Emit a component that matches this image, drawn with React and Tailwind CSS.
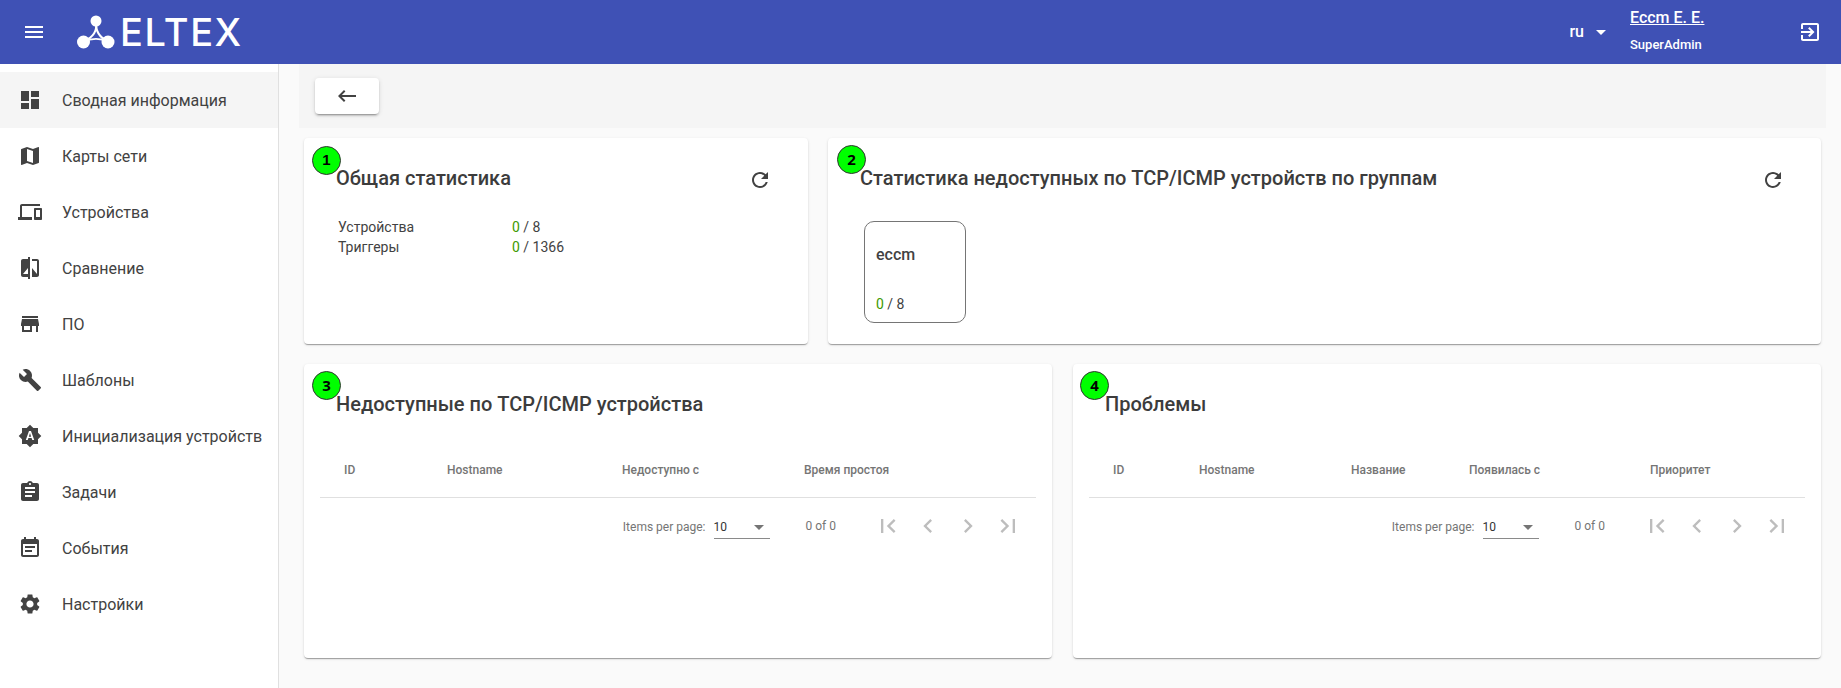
import React from "react";

const P = {
  menu: "M3 18h18v-2H3v2zm0-5h18v-2H3v2zm0-7v2h18V6H3z",
  dashboard: "M3 13h8V3H3v10zm0 8h8v-6H3v6zm10 0h8V11h-8v10zm0-18v6h8V3h-8z",
  map: "M20.5 3l-.16.03L15 5.1 9 3 3.36 4.9c-.21.07-.36.25-.36.48V20.5c0 .28.22.5.5.5l.16-.03L9 18.9l6 2.1 5.64-1.9c.21-.07.36-.25.36-.48V3.5c0-.28-.22-.5-.5-.5zM15 19l-6-2.11V5l6 2.11V19z",
  devices: "M4 6h18V4H4c-1.1 0-2 .9-2 2v11H0v3h14v-3H4V6zm19 2h-6c-.55 0-1 .45-1 1v10c0 .55.45 1 1 1h6c.55 0 1-.45 1-1V9c0-.55-.45-1-1-1zm-1 9h-4v-7h4v7z",
  compare: "M10 3H5c-1.1 0-2 .9-2 2v14c0 1.1.9 2 2 2h5v2h2V1h-2v2zm0 15H5l5-6v6zm9-15h-5v2h5v13l-5-6v9h5c1.1 0 2-.9 2-2V5c0-1.1-.9-2-2-2z",
  store: "M20 4H4v2h16V4zm1 10v-2l-1-5H4l-1 5v2h1v6h10v-6h4v6h2v-6h1zm-9 4H6v-4h6v4z",
  build: "M22.7 19l-9.1-9.1c.9-2.3.4-5-1.5-6.9-2-2-5-2.4-7.4-1.3L9 6 6 9 1.6 4.7C.4 7.1.9 10.1 2.9 12.1c1.9 1.9 4.6 2.4 6.9 1.5l9.1 9.1c.4.4 1 .4 1.4 0l2.3-2.3c.5-.4.5-1.1.1-1.4z",
  auto: "M10.85 12.65h2.3L12 9l-1.15 3.65zM20 8.69V4h-4.69L12 .69 8.69 4H4v4.69L.69 12 4 15.31V20h4.69L12 23.31 15.31 20H20v-4.69L23.31 12 20 8.69zM14.3 16l-.7-2h-3.2l-.7 2H7.8L11 7h2l3.2 9h-1.9z",
  assignment: "M19 3h-4.18C14.4 1.84 13.3 1 12 1c-1.3 0-2.4.84-2.82 2H5c-1.1 0-2 .9-2 2v14c0 1.1.9 2 2 2h14c1.1 0 2-.9 2-2V5c0-1.1-.9-2-2-2zm-7 0c.55 0 1 .45 1 1s-.45 1-1 1-1-.45-1-1 .45-1 1-1zm2 14H7v-2h7v2zm3-4H7v-2h10v2zm0-4H7V7h10v2z",
  event: "M17 10H7v2h10v-2zm2-7h-1V1h-2v2H8V1H6v2H5c-1.11 0-1.99.9-1.99 2L3 19c0 1.1.89 2 2 2h14c1.1 0 2-.9 2-2V5c0-1.1-.9-2-2-2zm0 16H5V8h14v11zm-5-5H7v2h7v-2z",
  settings: "M19.14 12.94c.04-.3.06-.61.06-.94 0-.32-.02-.64-.07-.94l2.03-1.58c.18-.14.23-.41.12-.61l-1.92-3.32c-.12-.22-.37-.29-.59-.22l-2.39.96c-.5-.38-1.03-.7-1.62-.94l-.36-2.54c-.04-.24-.24-.41-.48-.41h-3.84c-.24 0-.43.17-.47.41l-.36 2.54c-.59.24-1.13.57-1.62.94l-2.39-.96c-.22-.08-.47 0-.59.22L2.74 8.87c-.12.21-.08.47.12.61l2.03 1.58c-.05.3-.09.63-.09.94s.02.64.07.94l-2.03 1.58c-.18.14-.23.41-.12.61l1.92 3.32c.12.22.37.29.59.22l2.39-.96c.5.38 1.03.7 1.62.94l.36 2.54c.05.24.24.41.48.41h3.84c.24 0 .44-.17.47-.41l.36-2.54c.59-.24 1.13-.56 1.62-.94l2.39.96c.22.08.47 0 .59-.22l1.92-3.32c.12-.22.07-.47-.12-.61l-2.01-1.58zM12 15.6c-1.98 0-3.6-1.62-3.6-3.6s1.62-3.6 3.6-3.6 3.6 1.62 3.6 3.6-1.62 3.6-3.6 3.6z",
  back: "M21 11H6.83l3.58-3.59L9 6l-6 6 6 6 1.41-1.41L6.83 13H21z",
  exit: "M10.09 15.59L11.5 17l5-5-5-5-1.41 1.41L12.67 11H3v2h9.67l-2.58 2.59zM19 3H5c-1.11 0-2 .9-2 2v4h2V5h14v14H5v-4H3v4c0 1.1.89 2 2 2h14c1.1 0 2-.9 2-2V5c0-1.1-.9-2-2-2z",
  refresh: "M17.65 6.35C16.2 4.9 14.21 4 12 4c-4.42 0-7.99 3.58-7.99 8s3.57 8 7.99 8c3.73 0 6.84-2.55 7.73-6h-2.08c-.82 2.33-3.04 4-5.65 4-3.31 0-6-2.69-6-6s2.69-6 6-6c1.66 0 3.14.69 4.22 1.78L13 11h7V4l-2.35 2.35z",
  first: "M18.41 16.59L13.82 12l4.59-4.59L17 6l-6 6 6 6zM6 6h2v12H6z",
  prev: "M15.41 7.41L14 6l-6 6 6 6 1.41-1.41L10.83 12z",
  next: "M10 6L8.59 7.41 13.17 12l-4.58 4.59L10 18l6-6z",
  last: "M5.59 7.41L10.18 12l-4.59 4.59L7 18l6-6-6-6zM16 6h2v12h-2z",
};

function Icon({ d, className = "w-6 h-6" }) {
  return (
    <svg viewBox="0 0 24 24" className={className} fill="currentColor">
      <path d={d} />
    </svg>
  );
}

const NAV = [
  ["dashboard", "Сводная информация", true],
  ["map", "Карты сети"],
  ["devices", "Устройства"],
  ["compare", "Сравнение"],
  ["store", "ПО"],
  ["build", "Шаблоны"],
  ["auto", "Инициализация устройств"],
  ["assignment", "Задачи"],
  ["event", "События"],
  ["settings", "Настройки"],
];

function Logo() {
  return (
    <div className="flex items-center ml-[31px] text-white">
      <svg viewBox="0 0 38 34" className="w-[38px] h-[34px]" fill="none">
        <path d="M19 6C21 16 15 23 6 27" stroke="#fff" strokeWidth="2" />
        <path d="M19 6C18 16 23 23 32 27" stroke="#fff" strokeWidth="2" />
        <path d="M6 27C14 23 24 23 32 27" stroke="#fff" strokeWidth="2" />
        <circle cx="19" cy="6" r="5.5" fill="#fff" />
        <circle cx="6.5" cy="27" r="6.5" fill="#fff" />
        <circle cx="31" cy="27" r="6.5" fill="#fff" />
      </svg>
      <span className="ml-[5px] text-[38px] leading-none font-medium tracking-[1.5px] font-['Inter',sans-serif]">
        ELTEX
      </span>
    </div>
  );
}

function Badge({ n, className }) {
  return (
    <div
      className={`absolute w-[29px] h-[29px] rounded-full bg-[#00ff00] border border-[#333] flex items-center justify-center text-[15px] font-bold text-black ${className}`}
    >
      {n}
    </div>
  );
}

function Card({ className = "", children }) {
  return (
    <section className={`relative bg-white rounded-[4px] shadow-[0_2px_1px_-1px_rgba(0,0,0,0.2),0_1px_1px_0_rgba(0,0,0,0.14),0_1px_3px_0_rgba(0,0,0,0.12)] ${className}`}>
      {children}
    </section>
  );
}

function Title({ children }) {
  return <h2 className="text-[20px] leading-8 font-medium text-[#3c3c3c]">{children}</h2>;
}

function Refresh() {
  return (
    <div className="mt-[6px] text-[#424242]">
      <Icon d={P.refresh} />
    </div>
  );
}

function Value({ a, b }) {
  return (
    <span>
      <span className="text-[#3d9a00]">{a}</span> / {b}
    </span>
  );
}

function Pager() {
  return (
    <div className="h-14 flex items-center justify-end pr-2 text-[12px] text-[#757575]">
      <span className="mr-2 mt-[2px]">Items per page:</span>
      <div className="w-14 h-6 mt-[1px] flex items-center justify-between border-b border-[#8a8a8a] text-[#333] pr-[6px] pb-[1px] pt-[3px]">
        <span>10</span>
        <span className="w-0 h-0 border-l-[5px] border-r-[5px] border-t-[5px] border-l-transparent border-r-transparent border-t-[#757575]" />
      </div>
      <span className="ml-9 mr-[32px]">0 of 0</span>
      <div className="flex text-[#bdbdbd]">
        {[P.first, P.prev, P.next, P.last].map((d, i) => (
          <div key={i} className="w-10 h-10 flex items-center justify-center">
            <Icon d={d} className="w-7 h-7" />
          </div>
        ))}
      </div>
    </div>
  );
}

function DataCard({ n, title, cols, template, badgeClass }) {
  return (
    <Card className="flex-1 h-[294px]">
      <Badge n={n} className={badgeClass} />
      <div className="pt-6 pl-8">
        <Title>{title}</Title>
      </div>
      <div className="mt-[22px] mx-4">
        <div className={`h-14 grid items-center pl-6 pt-[1px] border-b border-[#e0e0e0] text-[12px] font-medium text-[#757575] ${template}`}>
          {cols.map((c) => (
            <span key={c}>{c}</span>
          ))}
        </div>
        <Pager />
      </div>
    </Card>
  );
}

export default function App() {
  return (
    <div className="w-full h-screen flex flex-col overflow-hidden bg-[#fafafa] font-['Roboto',sans-serif] text-[14px] text-[#424242]">
      <header className="h-16 shrink-0 bg-[#3f51b5] text-white flex items-center">
        <div className="ml-[22px]">
          <Icon d={P.menu} />
        </div>
        <Logo />
        <div className="ml-auto flex items-center">
          <span className="text-[16px] font-medium">ru</span>
          <span className="ml-[12px] w-0 h-0 border-l-[5px] border-r-[5px] border-t-[5px] border-l-transparent border-r-transparent border-t-white" />
          <div className="ml-6 w-[168px] flex flex-col h-16 pt-2">
            <span className="text-[16px] leading-5 font-medium underline self-start">Eccm E. E.</span>
            <span className="mt-[7px] text-[13px] leading-5 font-medium">SuperAdmin</span>
          </div>
          <div className="mr-[19px]">
            <Icon d={P.exit} />
          </div>
        </div>
      </header>
      <div className="flex-1 flex min-h-0">
        <aside className="w-[279px] shrink-0 bg-white border-r border-[#e0e0e0] pt-2">
          {NAV.map(([icon, label, active]) => (
            <div key={label} className={`h-14 flex items-center pl-[18px] ${active ? "bg-[#f5f5f5]" : ""}`}>
              <Icon d={P[icon]} />
              <span className="ml-5 mt-[2px] text-[16px] text-[#424242]">{label}</span>
            </div>
          ))}
        </aside>
        <main className="flex-1 min-w-0 pl-5 pr-[15px]">
          <div className="h-16 bg-[#f5f5f5] flex items-center pl-4">
            <button className="w-16 h-9 mt-[-1px] bg-white rounded-[4px] flex items-center justify-center text-[#424242] shadow-[0_3px_1px_-2px_rgba(0,0,0,0.2),0_2px_2px_0_rgba(0,0,0,0.14),0_1px_5px_0_rgba(0,0,0,0.12)]">
              <Icon d={P.back} />
            </button>
          </div>
          <div className="px-[5px] pt-[10px] flex flex-col gap-5">
            <div className="flex gap-5">
              <Card className="w-[504px] h-[206px]">
                <Badge n="1" className="left-[8px] top-[8px] font-['Liberation_Sans',sans-serif]" />
                <div className="flex justify-between items-start pt-6 pl-8 pr-9">
                  <Title>Общая статистика</Title>
                  <Refresh />
                </div>
                <div className="mt-[23px] ml-[34px] leading-5 grid grid-cols-[174px_1fr]">
                  <span>Устройства</span>
                  <Value a="0" b="8" />
                  <span>Триггеры</span>
                  <Value a="0" b="1366" />
                </div>
              </Card>
              <Card className="flex-1 h-[206px]">
                <Badge n="2" className="left-[9px] top-[7px] font-['Open_Sans',sans-serif]" />
                <div className="flex justify-between items-start pt-6 pl-8 pr-9">
                  <Title>Статистика недоступных по TCP/ICMP устройств по группам</Title>
                  <Refresh />
                </div>
                <div className="mt-[27px] ml-9 w-[102px] h-[102px] rounded-[10px] border border-[#757575] flex flex-col justify-between pl-[11px] pt-[23px] pb-[8px]">
                  <span className="text-[16px] leading-5 font-medium">eccm</span>
                  <span className="leading-5">
                    <Value a="0" b="8" />
                  </span>
                </div>
              </Card>
            </div>
            <div className="flex gap-[21px]">
              <DataCard
                n="3"
                title="Недоступные по TCP/ICMP устройства"
                cols={["ID", "Hostname", "Недоступно с", "Время простоя"]}
                template="grid-cols-[103px_175px_182px_1fr]"
                badgeClass="left-[8px] top-[7px] font-['Open_Sans',sans-serif]"
              />
              <DataCard
                n="4"
                title="Проблемы"
                cols={["ID", "Hostname", "Название", "Появилась с", "Приоритет"]}
                template="grid-cols-[86px_152px_118px_181px_1fr]"
                badgeClass="left-[7px] top-[7px] font-['Open_Sans',sans-serif]"
              />
            </div>
          </div>
        </main>
      </div>
    </div>
  );
}
